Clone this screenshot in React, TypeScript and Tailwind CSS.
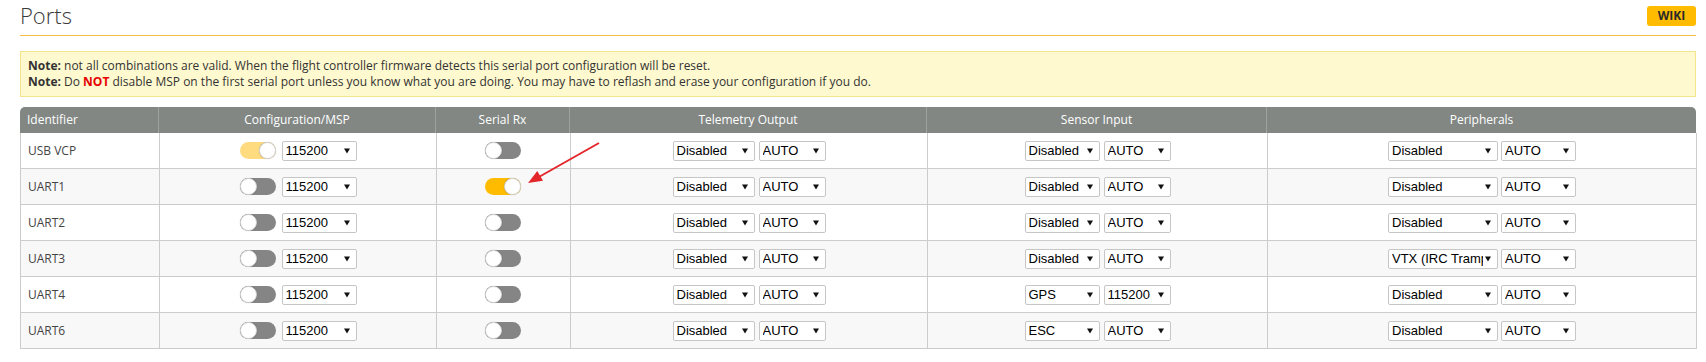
import React from "react";

type Row = {
  id: string;
  msp: "faded" | "off";
  rx: boolean;
  tel: [string, string];
  sen: [string, string];
  per: [string, string];
};

const rows: Row[] = [
  { id: "USB VCP", msp: "faded", rx: false, tel: ["Disabled", "AUTO"], sen: ["Disabled", "AUTO"], per: ["Disabled", "AUTO"] },
  { id: "UART1", msp: "off", rx: true, tel: ["Disabled", "AUTO"], sen: ["Disabled", "AUTO"], per: ["Disabled", "AUTO"] },
  { id: "UART2", msp: "off", rx: false, tel: ["Disabled", "AUTO"], sen: ["Disabled", "AUTO"], per: ["Disabled", "AUTO"] },
  { id: "UART3", msp: "off", rx: false, tel: ["Disabled", "AUTO"], sen: ["Disabled", "AUTO"], per: ["VTX (IRC Tramp)", "AUTO"] },
  { id: "UART4", msp: "off", rx: false, tel: ["Disabled", "AUTO"], sen: ["GPS", "115200"], per: ["Disabled", "AUTO"] },
  { id: "UART6", msp: "off", rx: false, tel: ["Disabled", "AUTO"], sen: ["ESC", "AUTO"], per: ["Disabled", "AUTO"] },
];

function Toggle({ state }: { state: "on" | "faded" | "off" }) {
  const bg =
    state === "on" ? "bg-[#ffbb00] justify-end" : state === "faded" ? "bg-[#ffdb80] justify-end" : "bg-[#858585] justify-start";
  return (
    <div className={`flex items-center w-[36px] h-[17px] rounded-full ${bg}`}>
      <div className="w-[17px] h-[17px] rounded-full bg-white border border-[#d6d6d6] shadow-[0_0_1px_rgba(0,0,0,0.3)]" />
    </div>
  );
}

function Select({ value, w }: { value: string; w: string }) {
  return (
    <div
      className={`flex items-center h-[20px] bg-white border border-[#c6c6c6] rounded-[2px] pl-[3px] pr-[6px] ${w}`}
      style={{ fontFamily: '"Liberation Sans", Arial, sans-serif' }}
    >
      <span className="flex-1 overflow-hidden whitespace-nowrap text-[13px] leading-[18px] text-black">{value}</span>
      <svg width="6" height="6" viewBox="0 0 6 6" className="shrink-0 ml-[2px]">
        <polygon points="0,0.5 6,0.5 3,5.5" fill="#111" />
      </svg>
    </div>
  );
}

export default function App() {
  const cols = "grid grid-cols-[139px_277px_134px_357px_340px_429px]";
  return (
    <div
      className="relative w-[1706px] h-[362px] bg-white pl-[20px] pr-[10px] text-[#333]"
      style={{ fontFamily: '"Open Sans", "Noto Sans", sans-serif' }}
    >
      {/* title bar */}
      <div className="flex justify-between items-start h-[36px] border-b border-[#f3bf45]">
        <div className="pt-[2px] text-[22px] leading-[26px] font-light text-[#3a3a3a]">Ports</div>
        <div className="mt-[6px] w-[49px] h-[20px] rounded-[3px] bg-[#ffbb00] flex items-center justify-center text-[12px] font-bold text-[#2a2a2a]">
          WIKI
        </div>
      </div>

      {/* note */}
      <div className="mt-[15px] border border-[#f4e48e] bg-[#fff9cf] px-[7px] py-[6px] text-[12px] leading-[16px] text-[#333]">
        <div>
          <span className="font-bold">Note:</span> not all combinations are valid. When the flight controller firmware detects this serial port configuration will be reset.
        </div>
        <div>
          <span className="font-bold">Note:</span> Do <span className="font-bold text-[#e60000]">NOT</span> disable MSP on the first serial port unless you know what you are doing. You may have to reflash and erase your configuration if you do.
        </div>
      </div>

      {/* table */}
      <div className="mt-[10px] text-[12px]">
        <div className={`${cols} h-[26px] bg-[#828784] rounded-t-[5px] text-white`}>
          <div className="flex items-center pl-[7px] border-r border-[#9ea29f]">Identifier</div>
          <div className="flex items-center justify-center border-r border-[#9ea29f]">Configuration/MSP</div>
          <div className="flex items-center justify-center border-r border-[#9ea29f]">Serial Rx</div>
          <div className="flex items-center justify-center border-r border-[#9ea29f]">Telemetry Output</div>
          <div className="flex items-center justify-center border-r border-[#9ea29f]">Sensor Input</div>
          <div className="flex items-center justify-center">Peripherals</div>
        </div>
        <div className="border-l border-[#cccccc]">
          {rows.map((r, i) => (
            <div key={r.id} className={`${cols} h-[36px] ${i % 2 === 1 ? "bg-[#f8f8f8]" : "bg-white"}`}>
              <div className="flex items-center pl-[7px] border-r border-b border-[#cccccc] text-[#444]">{r.id}</div>
              <div className="flex items-center justify-center gap-[6px] border-r border-b border-[#cccccc]">
                <Toggle state={r.msp === "faded" ? "faded" : "off"} />
                <Select value="115200" w="w-[75px]" />
              </div>
              <div className="flex items-center justify-center border-r border-b border-[#cccccc]">
                <div className="mr-[2px]">
                  <Toggle state={r.rx ? "on" : "off"} />
                </div>
              </div>
              <div className="flex items-center justify-center gap-[4px] border-r border-b border-[#cccccc]">
                <Select value={r.tel[0]} w="w-[82px]" />
                <Select value={r.tel[1]} w="w-[67px]" />
              </div>
              <div className="flex items-center justify-center gap-[4px] border-r border-b border-[#cccccc]">
                <Select value={r.sen[0]} w="w-[75px]" />
                <Select value={r.sen[1]} w="w-[67px]" />
              </div>
              <div className="flex items-center justify-center gap-[3px] border-r border-b border-[#cccccc]">
                <Select value={r.per[0]} w="w-[110px]" />
                <Select value={r.per[1]} w="w-[75px]" />
              </div>
            </div>
          ))}
        </div>
      </div>

      {/* red annotation arrow */}
      <svg className="absolute left-0 top-0 pointer-events-none" width="1706" height="362">
        <line x1="599" y1="143" x2="538" y2="177.5" stroke="#e3262a" strokeWidth="2" />
        <polygon points="528,183 543,180.8 537.3,171" fill="#e3262a" />
      </svg>
    </div>
  );
}
